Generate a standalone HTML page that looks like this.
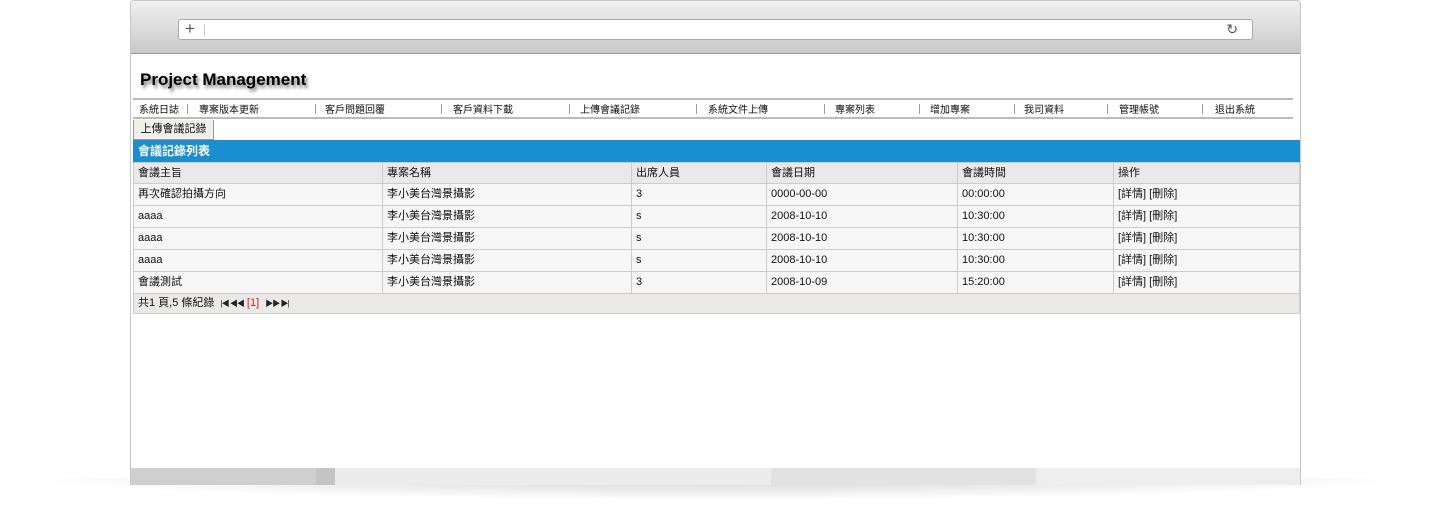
<!DOCTYPE html>
<html><head><meta charset="utf-8"><style>
*{margin:0;padding:0;box-sizing:border-box}
body{width:1435px;height:510px;background:#fff;position:relative;overflow:hidden;font-family:"Liberation Sans","Noto Sans CJK TC",sans-serif;font-size:11px;color:#111}
.shadow{position:absolute;left:20px;right:20px;top:478px;height:22px;background:radial-gradient(ellipse at center top,rgba(0,0,0,.18),rgba(0,0,0,0) 70%)}
.win{position:absolute;left:130px;top:0;width:1171px;height:485px;background:#fff;border:1px solid #c8c8c8;border-bottom:none;border-radius:4px 4px 0 0;overflow:hidden}
.tb{position:absolute;left:0;top:0;right:0;height:53px;background:linear-gradient(#f0f0f0,#c9c9c9);border-bottom:1px solid #999}
.addr{position:absolute;left:47px;top:18px;width:1075px;height:21px;background:#fff;border:1px solid #aaa;border-radius:3px}
.addr .p{position:absolute;left:6px;top:-1px;font-size:17px;color:#555}
.addr .s{position:absolute;left:25px;top:4px;height:12px;border-left:1px solid #ccc}
.addr .r{position:absolute;right:14px;top:1px;font-size:14px;color:#555}
.title{position:absolute;left:9px;top:69px;font-weight:bold;font-size:17px;font-family:"Liberation Sans",sans-serif;color:#000;text-shadow:2px 3px 3px #777}
.nav{position:absolute;left:2px;top:97px;width:1160px;height:21px;border-top:2px solid #bbb;border-bottom:2px solid #bbb;background:#fff}
.nav span{position:absolute;top:1px;font-size:10px}
.nav i{position:absolute;top:4px;height:10px;border-left:1px solid #999}
.btn{position:absolute;left:2px;top:119px;width:81px;height:20px;background:#f1efe9;border:1px solid #999;border-top:none;font-size:11px;text-align:center;line-height:19px}
.bh{position:absolute;left:2px;top:139px;width:1167px;height:22px;background:#1a8fcf;color:#fff;font-weight:bold;font-size:12px;line-height:22px;padding-left:5px}
table{position:absolute;left:2px;top:161px;width:1167px;border-collapse:collapse}
td{border:1px solid #ccc;height:22px;padding:0 4px;font-size:11px;background:#f6f6f6;line-height:19px}
tr.h td{background:#ebe9e7;height:21px}
tr.f td{background:#ebe9e7;height:20px}
.sb{position:absolute;left:0;top:467px;right:0;height:18px;background:linear-gradient(90deg,#cfcfcf 0,#cfcfcf 185px,#c4c4c4 185px,#c4c4c4 204px,#ececec 204px,#ececec 640px,#e2e2e2 640px,#e2e2e2 905px,#eee 905px)}
.pg{font-size:8px;color:#222;letter-spacing:-1px}
</style></head><body>
<div class="shadow"></div>
<div class="win">
<div class="tb"><div class="addr"><span class="p">+</span><span class="s"></span><span class="r">↻</span></div></div>
<div class="title">Project Management</div>
<div class="nav">
<span style="left:6px">系統日誌</span><i style="left:54px"></i>
<span style="left:66px">專案版本更新</span><i style="left:182px"></i>
<span style="left:192px">客戶問題回覆</span><i style="left:308px"></i>
<span style="left:320px">客戶資料下載</span><i style="left:436px"></i>
<span style="left:447px">上傳會議記錄</span><i style="left:563px"></i>
<span style="left:575px">系統文件上傳</span><i style="left:691px"></i>
<span style="left:702px">專案列表</span><i style="left:786px"></i>
<span style="left:797px">增加專案</span><i style="left:881px"></i>
<span style="left:891px">我司資料</span><i style="left:974px"></i>
<span style="left:986px">管理帳號</span><i style="left:1069px"></i>
<span style="left:1082px">退出系統</span>
</div>
<div class="btn">上傳會議記錄</div>
<div class="bh">會議記錄列表</div>
<table>
<tr class="h"><td style="width:249px">會議主旨</td><td style="width:249px">專案名稱</td><td style="width:135px">出席人員</td><td style="width:191px">會議日期</td><td style="width:156px">會議時間</td><td>操作</td></tr>
<tr><td>再次確認拍攝方向</td><td>李小美台灣景攝影</td><td>3</td><td>0000-00-00</td><td>00:00:00</td><td>[詳情] [刪除]</td></tr>
<tr><td>aaaa</td><td>李小美台灣景攝影</td><td>s</td><td>2008-10-10</td><td>10:30:00</td><td>[詳情] [刪除]</td></tr>
<tr><td>aaaa</td><td>李小美台灣景攝影</td><td>s</td><td>2008-10-10</td><td>10:30:00</td><td>[詳情] [刪除]</td></tr>
<tr><td>aaaa</td><td>李小美台灣景攝影</td><td>s</td><td>2008-10-10</td><td>10:30:00</td><td>[詳情] [刪除]</td></tr>
<tr><td>會議測試</td><td>李小美台灣景攝影</td><td>3</td><td>2008-10-09</td><td>15:20:00</td><td>[詳情] [刪除]</td></tr>
<tr class="f"><td colspan="6">共1 頁,5 條紀錄 &nbsp;<span class="pg">|◀ ◀◀</span> <span style="color:#d22">[1]</span> &nbsp;<span class="pg">▶▶ ▶|</span></td></tr>
</table>
<div class="sb"></div>
</div>
</body></html>
